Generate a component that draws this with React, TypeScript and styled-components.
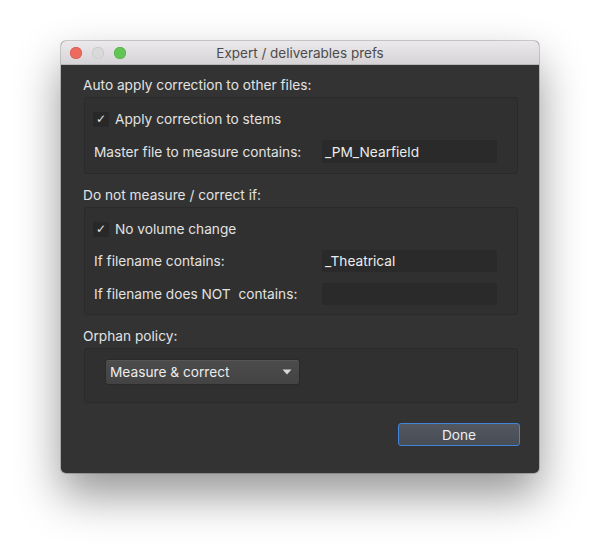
import React from "react";
import styled, { createGlobalStyle } from "styled-components";

const Global = createGlobalStyle`
  html, body { margin: 0; padding: 0; background: #ffffff; }
  body { font-family: Inter, "Liberation Sans", Arial, sans-serif; }
  * { box-sizing: border-box; }
`;

const Page = styled.div`
  width: 600px;
  height: 555px;
  padding: 41px 0 0 61px;
`;

const Window = styled.div`
  width: 478px;
  height: 432px;
  border-radius: 5px;
  overflow: hidden;
  display: flex;
  flex-direction: column;
  background: #333333;
  box-shadow: 0 22px 45px rgba(0, 0, 0, 0.42), 0 0 0 1px rgba(0, 0, 0, 0.18);
`;

const TitleBar = styled.div`
  height: 24px;
  flex: none;
  display: flex;
  align-items: center;
  position: relative;
  background: linear-gradient(#ebe9eb, #d6d4d6);
  border-bottom: 1px solid #b8b6b8;
  padding-left: 9px;
  gap: 10px;
`;

const Light = styled.span<{ $c: string; $b: string }>`
  width: 12px;
  height: 12px;
  border-radius: 50%;
  background: ${(p) => p.$c};
  box-shadow: inset 0 0 0 0.5px ${(p) => p.$b};
`;

const Title = styled.div`
  position: absolute;
  left: 0;
  right: 0;
  text-align: center;
  font-size: 13.5px;
  color: #4c4c4c;
  pointer-events: none;
`;

const Body = styled.div`
  flex: 1;
  display: flex;
  flex-direction: column;
  padding: 12px 21px 0 23px;
  color: #e2e2e2;
  font-size: 13.7px;
`;

const SectionLabel = styled.div<{ $top?: number }>`
  height: 16px;
  line-height: 16px;
  margin-top: ${(p) => p.$top ?? 0}px;
  margin-left: -1px;
  margin-bottom: 4px;
`;

const Group = styled.div<{ $pt: number; $pb: number; $h?: number }>`
  background: #303030;
  border: 1px solid #2a2a2a;
  border-radius: 3px;
  padding: ${(p) => p.$pt}px 20px ${(p) => p.$pb}px 9px;
  display: flex;
  flex-direction: column;
  ${(p) => (p.$h ? `height: ${p.$h}px;` : "")}
`;

const CheckRow = styled.label`
  display: flex;
  align-items: center;
  gap: 6px;
  height: 16px;
  margin-left: -1px;
`;

const Box = styled.span`
  width: 16px;
  height: 15px;
  background: #282828;
  border-radius: 2px;
  display: flex;
  align-items: center;
  justify-content: center;
  color: #e8e8e8;
  font-size: 12px;
  font-family: "DejaVu Sans", sans-serif;
`;

const FieldRow = styled.div<{ $top: number; $h: number }>`
  display: grid;
  grid-template-columns: 228px 175px;
  align-items: center;
  margin-top: ${(p) => p.$top}px;
  height: ${(p) => p.$h}px;
`;

const Input = styled.div`
  height: 100%;
  background: #2a2a2a;
  border-radius: 2px;
  padding: 0 3px;
  display: flex;
  align-items: center;
  color: #ececec;
`;

const Select = styled.div`
  margin-top: 10px;
  margin-left: 11px;
  width: 195px;
  height: 26px;
  border-radius: 3px;
  border: 1px solid #2a2a2a;
  background: linear-gradient(#4c4c4c, #434343);
  box-shadow: inset 0 1px 0 rgba(255, 255, 255, 0.06);
  display: flex;
  align-items: center;
  justify-content: space-between;
  padding: 0 7px 0 4px;
  color: #ececec;
`;

const Footer = styled.div`
  display: flex;
  justify-content: flex-end;
  margin-top: 20px;
  margin-right: -2px;
`;

const DoneButton = styled.button`
  width: 122px;
  height: 23px;
  border: 1px solid #3f86d8;
  border-radius: 3px;
  background: linear-gradient(#535861, #484c53);
  color: #ededed;
  font-family: Inter, "Liberation Sans", Arial, sans-serif;
  font-size: 13.7px;
  padding: 0;
`;

export default function App() {
  return (
    <Page>
      <Global />
      <Window>
        <TitleBar>
          <Light $c="#ed6a5e" $b="#d0524a" />
          <Light $c="#d9d9d9" $b="#c2c2c2" />
          <Light $c="#61c454" $b="#4ea73f" />
          <Title>Expert / deliverables prefs</Title>
        </TitleBar>
        <Body>
          <SectionLabel>Auto apply correction to other files:</SectionLabel>
          <Group $pt={13} $pb={10}>
            <CheckRow>
              <Box>✓</Box>
              Apply correction to stems
            </CheckRow>
            <FieldRow $top={13} $h={23}>
              <span>Master file to measure contains:</span>
              <Input>_PM_Nearfield</Input>
            </FieldRow>
          </Group>
          <SectionLabel $top={13}>Do not measure / correct if:</SectionLabel>
          <Group $pt={13} $pb={9}>
            <CheckRow>
              <Box>✓</Box>
              No volume change
            </CheckRow>
            <FieldRow $top={13} $h={22}>
              <span>If filename contains:</span>
              <Input>_Theatrical</Input>
            </FieldRow>
            <FieldRow $top={11} $h={22}>
              <span>If filename does NOT&nbsp; contains:</span>
              <Input />
            </FieldRow>
          </Group>
          <SectionLabel $top={13}>Orphan policy:</SectionLabel>
          <Group $pt={0} $pb={0} $h={55}>
            <Select>
              <span>Measure &amp; correct</span>
              <svg width="10" height="6" viewBox="0 0 10 6">
                <path d="M0.5 0.5 L9.5 0.5 L5 5.5 Z" fill="#d8d8d8" />
              </svg>
            </Select>
          </Group>
          <Footer>
            <DoneButton>Done</DoneButton>
          </Footer>
        </Body>
      </Window>
    </Page>
  );
}
